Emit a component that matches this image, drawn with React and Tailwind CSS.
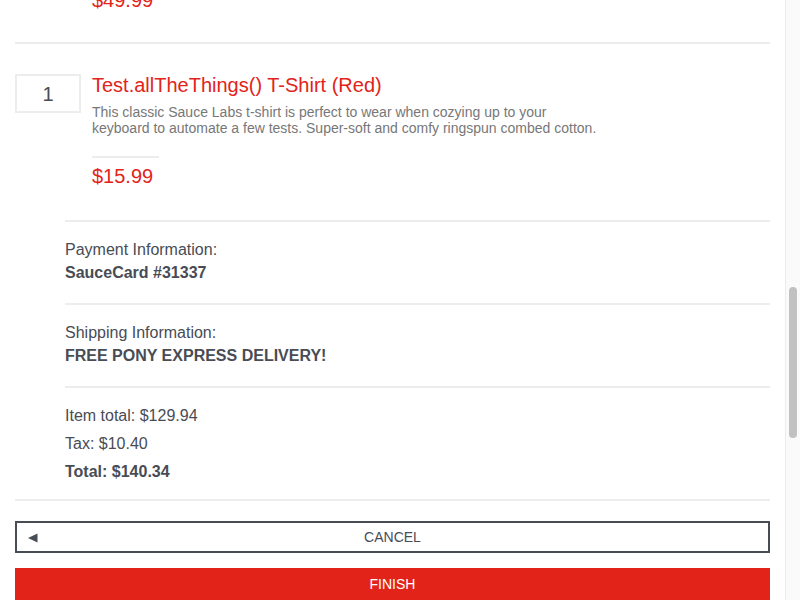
const font = { fontFamily: '"Liberation Sans", Arial, Helvetica, sans-serif' }

const Section = ({ label, value }) => (
    <div className="border-t-2 border-[#ededed] pt-[18px] pb-[20px]">
        <div className="text-[16px] leading-[20px]">{label}</div>
        <div className="mt-[3px] text-[16px] leading-[20px] font-bold">{value}</div>
    </div>
)

const App = () => {
    return (
        <div className="flex h-[600px] w-[800px] overflow-hidden bg-white text-[#484c55]" style={font}>
            <div className="w-[785px] px-[15px]">
                {/* tail of the previous item */}
                <div className="-mt-[12px] pl-[77px] text-[20px] leading-[24px] text-[#e2231a]">$49.99</div>
                <div className="mt-[30px] border-t-2 border-[#ededed]"></div>

                <div className="mt-[30px] flex">
                    <div className="flex h-[39px] w-[66px] shrink-0 items-center justify-center border-2 border-[#ededed] text-[20px]">1</div>
                    <div className="ml-[11px] -mt-[1px]">
                        <div className="text-[20px] leading-[24px] text-[#e2231a]">Test.allTheThings() T-Shirt (Red)</div>
                        <div className="mt-[7px] max-w-[510px] text-[14px] leading-[16px] text-[#777]">
                            This classic Sauce Labs t-shirt is perfect to wear when cozying up to your keyboard to automate a few tests. Super-soft and comfy ringspun combed cotton.
                        </div>
                        <div className="mt-[20px] w-[67px] border-t-2 border-[#ededed] pt-[6px] text-[20px] leading-[24px] text-[#e2231a]">$15.99</div>
                    </div>
                </div>

                <div className="ml-[50px] mt-[32px]">
                    <Section label="Payment Information:" value="SauceCard #31337" />
                    <Section label="Shipping Information:" value="FREE PONY EXPRESS DELIVERY!" />
                    <div className="border-t-2 border-[#ededed] pt-[18px] pb-[17px] text-[16px] leading-[20px]">
                        <div>Item total: $129.94</div>
                        <div className="mt-[8px]">Tax: $10.40</div>
                        <div className="mt-[8px] font-bold">Total: $140.34</div>
                    </div>
                </div>

                <div className="border-t-2 border-[#ededed] pt-[20px]">
                    <button className="relative flex h-[32px] w-full items-center justify-center border-2 border-[#484c55] bg-white text-[14px] text-[#484c55]">
                        <svg className="absolute left-[11px] top-[10px]" width="10" height="10" viewBox="0 0 10 10">
                            <path d="M0 5 L9.5 0.5 L9.5 9.5 Z" fill="#484c55" />
                        </svg>
                        CANCEL
                    </button>
                    <button className="mt-[15px] flex h-[34px] w-full items-center justify-center bg-[#e2231a] pb-[2px] text-[14px] text-white">
                        FINISH
                    </button>
                </div>
            </div>

            {/* scrollbar */}
            <div className="relative w-[15px] border-l border-[#ececec] bg-[#fafafa]">
                <div className="absolute left-[3px] top-[287px] h-[151px] w-[8px] rounded-full bg-[#c1c1c1]"></div>
            </div>
        </div>
    )
}

export default App
